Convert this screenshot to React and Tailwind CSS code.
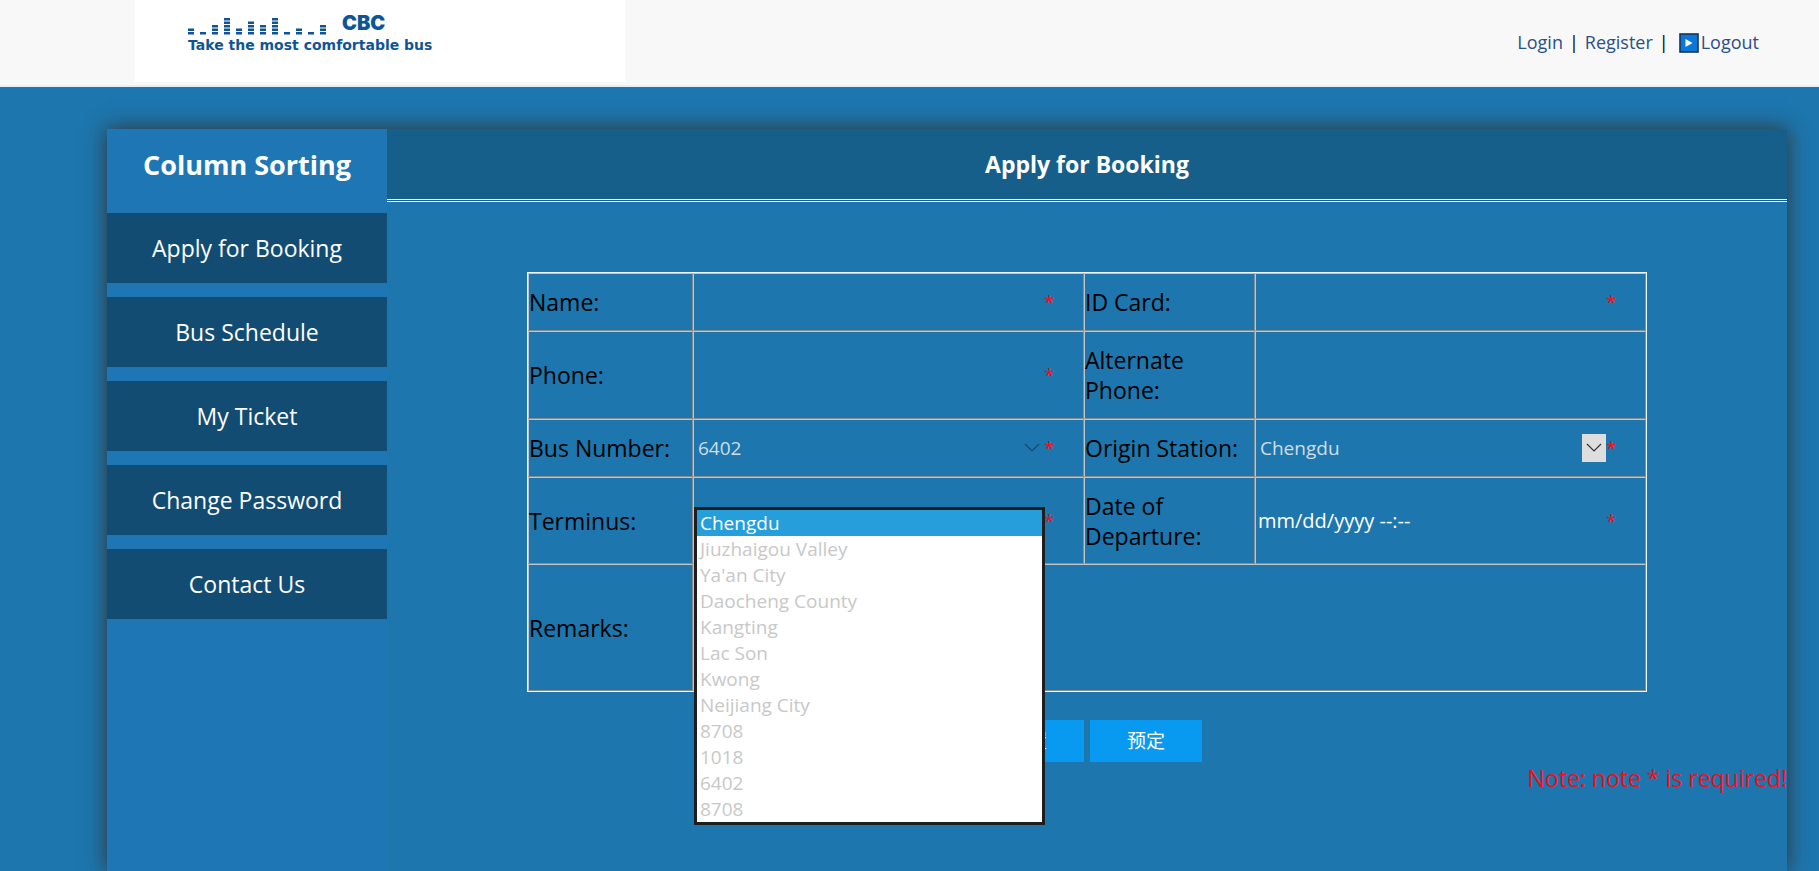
import React from "react";

const menu = ["Apply for Booking", "Bus Schedule", "My Ticket", "Change Password", "Contact Us"];
const stations = ["Chengdu", "Jiuzhaigou Valley", "Ya'an City", "Daocheng County", "Kangting", "Lac Son", "Kwong", "Neijiang City", "8708", "1018", "6402", "8708"];
const bars = [2, 1, 3, 5, 2, 4, 3, 5, 1, 2, 1, 3];

const cell = "border border-t-[#c4c4c4] border-l-[#c4c4c4] border-r-[#8c8c8c] border-b-[#8c8c8c] p-0";
const control = "block w-[350px] max-w-full h-7 bg-transparent outline-none leading-7";

function Logo() {
  return (
    <div className="h-[82px] w-[490px] bg-white pl-[53px] pt-[10px] text-[#0f5596] [font-family:'DejaVu_Sans',sans-serif]">
      <div className="flex items-end gap-4">
        <svg className="h-[18px] w-[138px]" viewBox="0 0 138 18" aria-hidden="true">
          {bars.map((n, i) =>
            Array.from({ length: n }, (_, k) => (
              <rect key={i + "-" + k} x={i * 12} y={14 - k * 3.5} width="6" height="2.5" fill="#0f5596" />
            ))
          )}
        </svg>
        <span className="text-[20px] font-black leading-[26px] [font-family:Inter,sans-serif]">CBC</span>
      </div>
      <p className="text-[14px] font-bold leading-[18px]">Take the most comfortable bus</p>
    </div>
  );
}

function Label({ id, children }) {
  return (
    <th scope="row" className={cell + " text-left font-normal leading-[30px]"}>
      <label htmlFor={id}>{children}</label>
    </th>
  );
}

function Star() {
  return <span className="text-[19px] leading-7 text-[#fb0a18]">*</span>;
}

function Chevron({ boxed }) {
  return (
    <span className={boxed ? "pointer-events-none absolute right-0 top-0 flex h-7 w-6 items-center justify-center bg-[#dedede] text-[#333]" : "pointer-events-none absolute right-0 top-0 flex h-7 w-6 items-center justify-center text-[#124a6c]"}>
      <svg width="16" height="10" viewBox="0 0 16 10" fill="none" stroke="currentColor" strokeWidth="1.2"><path d="M1 1l7 7 7-7" /></svg>
    </span>
  );
}

function TextField({ id, required }) {
  return (
    <div className="flex">
      <input id={id} type="text" className={control + " text-[19px] text-white"} />
      {required && <Star />}
    </div>
  );
}

function SelectField({ id, value, boxed }) {
  return (
    <div className="flex">
      <div className="relative">
        <select id={id} defaultValue={value} className={control + " appearance-none px-1 text-[19px] text-[#d0dde6]"}>
          <option>{value}</option>
        </select>
        <Chevron boxed={boxed} />
      </div>
      <Star />
    </div>
  );
}

export default function App() {
  return (
    <div className="flex min-h-screen flex-col bg-[#1d76ad] text-[23px] text-black [font-family:'Open_Sans','Noto_Sans_CJK_SC',sans-serif]">
      <header className="flex h-[87px] items-start justify-between border-b-2 border-[#e3f0f8] bg-[#f8f8f8] pl-[135px] pr-[60px]">
        <Logo />
        <nav className="flex h-[85px] items-center text-[18px] text-[#2b4f86]">
          <a href="#login">Login</a>
          <span className="px-[6px] text-black">|</span>
          <a href="#register">Register</a>
          <span className="px-[6px] text-black">|</span>
          <a href="#logout" className="ml-1 flex items-center gap-[2px]">
            <svg width="20" height="20" viewBox="0 0 20 20"><rect x="1" y="1" width="18" height="18" fill="#0a78d8" stroke="#17325c" strokeWidth="1.6" /><path d="M6.500 6l7 4-7 4z" fill="#fff" /></svg>
            Logout
          </a>
        </nav>
      </header>
      <div className="ml-[107px] mr-8 mt-[42px] flex flex-1 shadow-[0_0_20px_#333]">
        <aside className="w-[280px] shrink-0 bg-[#1e77b4] text-center text-white">
          <h2 className="h-[84px] text-[27px] font-bold leading-[72px]">Column Sorting</h2>
          <nav className="flex flex-col gap-[14px]">
            {menu.map((m) => (
              <a key={m} href="#menu" className="h-[70px] bg-[#134c72] leading-[70px]">{m}</a>
            ))}
          </nav>
        </aside>
        <main className="min-w-0 flex-1 bg-[#1d76ad]">
          <h1 className="h-[73px] border-b-3 border-double border-white bg-[#175f8b] text-center text-[23px] font-bold leading-[70px] text-white">Apply for Booking</h1>
          <form onSubmit={(e) => e.preventDefault()}>
            <table className="mx-auto mt-[70px] w-4/5 table-fixed border-separate border-spacing-0 border border-[#f4f4f4]">
              <colgroup>
                <col className="w-[165px]" />
                <col />
                <col className="w-[171px]" />
                <col />
              </colgroup>
              <tbody>
                <tr className="h-[58px]">
                  <Label id="name">Name:</Label>
                  <td className={cell}><TextField id="name" required /></td>
                  <Label id="idcard">ID Card:</Label>
                  <td className={cell}><TextField id="idcard" required /></td>
                </tr>
                <tr className="h-[88px]">
                  <Label id="phone">Phone:</Label>
                  <td className={cell}><TextField id="phone" required /></td>
                  <Label id="alt">Alternate Phone:</Label>
                  <td className={cell}><TextField id="alt" /></td>
                </tr>
                <tr className="h-[58px]">
                  <Label id="bus">Bus Number:</Label>
                  <td className={cell}><SelectField id="bus" value="6402" /></td>
                  <Label id="origin">Origin Station:</Label>
                  <td className={cell}><SelectField id="origin" value="Chengdu" boxed /></td>
                </tr>
                <tr className="h-[87px]">
                  <Label id="terminus">Terminus:</Label>
                  <td className={cell}>
                    <div className="flex">
                      <div className="relative h-7 w-[350px]">
                        <select id="terminus" size={12} defaultValue="Chengdu0" className="absolute left-0 top-0 z-10 h-[318px] w-[351px] appearance-none overflow-hidden border-3 border-[#1e1e1e] bg-white p-0 text-[19px] text-[#c8c8c8] outline-none">
                          {stations.map((s, i) => (
                            <option key={i} value={s + i} className={i === 0 ? "h-[26px] min-h-0 bg-[#259edb] bg-linear-to-r from-[#259edb] to-[#259edb] px-[3px] py-0 leading-[26px] text-white" : "h-[26px] min-h-0 px-[3px] py-0 leading-[26px]"}>{s}</option>
                          ))}
                        </select>
                      </div>
                      <Star />
                    </div>
                  </td>
                  <Label id="date">Date of Departure:</Label>
                  <td className={cell}>
                    <div className="flex">
                      <input id="date" type="text" placeholder="mm/dd/yyyy --:--" className={control + " px-[2px] text-[20px] text-white placeholder:text-white"} />
                      <Star />
                    </div>
                  </td>
                </tr>
                <tr className="h-[127px]">
                  <Label id="remarks">Remarks:</Label>
                  <td colSpan={3} className={cell}>
                    <textarea id="remarks" className="block h-[100px] w-full resize-none bg-transparent text-white outline-none" />
                  </td>
                </tr>
              </tbody>
            </table>
            <div className="mt-7 flex justify-center gap-[6px] text-[19px] text-white">
              <button type="reset" className="h-[42px] w-28 bg-[#079af0]">重置</button>
              <button type="submit" className="h-[42px] w-28 bg-[#079af0]">预定</button>
            </div>
            <p className="text-right leading-8 text-[#fb0a18]">Note: note * is required!</p>
          </form>
        </main>
      </div>
    </div>
  );
}
